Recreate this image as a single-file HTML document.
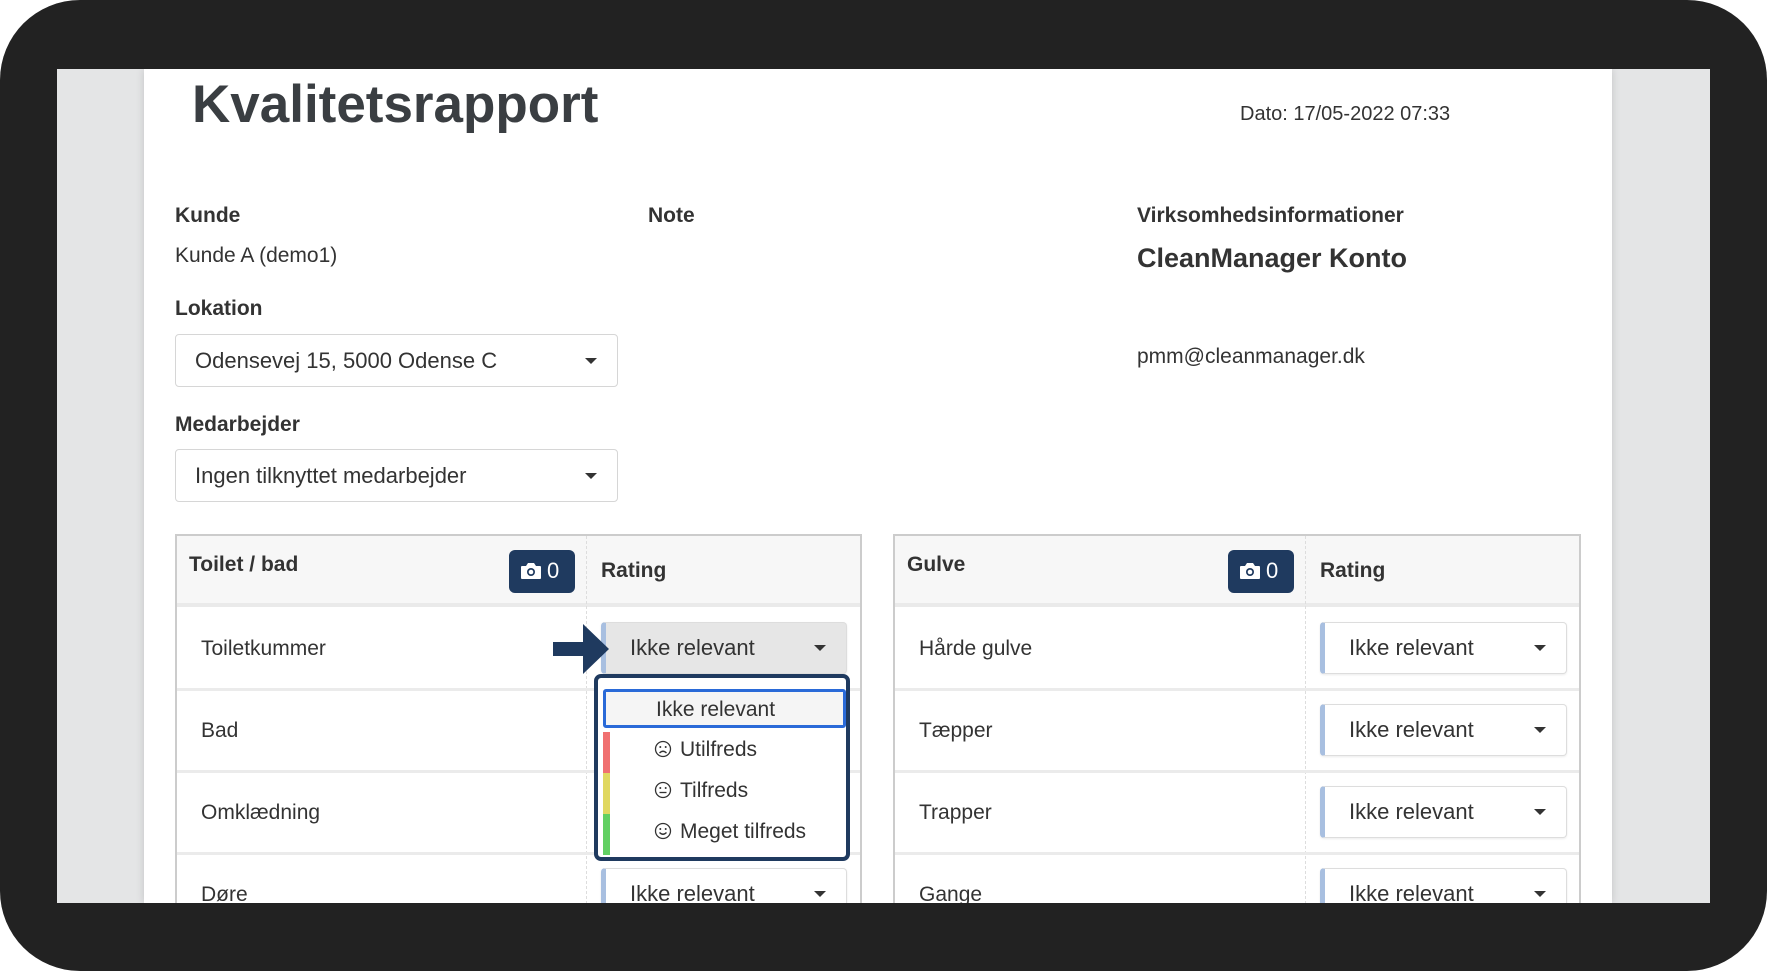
<!DOCTYPE html>
<html><head><meta charset="utf-8"><style>
*{box-sizing:border-box;margin:0;padding:0}
body{width:1767px;height:971px;background:#fff;font-family:"Liberation Sans",sans-serif;color:#333;position:relative;overflow:hidden}
.frame{position:absolute;left:0;top:0;width:1767px;height:971px;background:#222;border-radius:80px}
.screen{position:absolute;left:57px;top:69px;width:1653px;height:834px;background:#e4e5e6;overflow:hidden}
.page{position:absolute;left:87px;top:0;width:1468px;height:834px;background:#fff;box-shadow:0 0 8px rgba(0,0,0,.15)}
.a{position:absolute;white-space:nowrap}
.lbl{font-weight:bold;font-size:21px;color:#333}
.txt{font-size:21px;color:#333}
.sel{position:absolute;border:1px solid #d6d6d6;border-radius:4px;background:#fff;font-size:22px;color:#333}
.sel span{position:absolute;left:19px;top:50%;transform:translateY(-50%)}
.caret{position:absolute;right:20px;top:50%;margin-top:-3px;width:0;height:0;border-left:6px solid transparent;border-right:6px solid transparent;border-top:6px solid #333}
.tbl{position:absolute;border:2px solid #ccc;border-bottom:none}
.th{position:absolute;left:0;right:0;top:0;height:71px;background:#f7f7f7;border-bottom:4px solid #eaeaea}
.vdiv{position:absolute;top:0;bottom:0;width:0;border-left:1px dashed #ddd}
.row{position:absolute;left:0;right:0;height:82px;border-bottom:3px solid #ebebeb}
.cam{position:absolute;width:66px;height:43px;background:#1f3a5f;border-radius:6px;color:#fff;font-size:22px}
.rs{position:absolute;height:52px;border:1px solid #ddd;border-left:5px solid #a8bfe0;border-radius:4px;background:#fff;font-size:22px;box-shadow:0 1px 2px rgba(0,0,0,.08)}
.rs span{position:absolute;left:24px;top:50%;transform:translateY(-50%)}
.face{position:absolute;left:-26px;top:2px}
</style></head><body>
<div class="frame"></div>
<div class="screen">
<div class="page">
 <div class="a" style="left:48px;top:5px;font-size:53px;font-weight:bold;color:#3a3e42">Kvalitetsrapport</div>
 <div class="a txt" style="left:1096px;top:34px;font-size:20px">Dato: 17/05-2022 07:33</div>
 <div class="a lbl" style="left:31px;top:135px">Kunde</div>
 <div class="a txt" style="left:31px;top:175px">Kunde A (demo1)</div>
 <div class="a lbl" style="left:31px;top:228px">Lokation</div>
 <div class="sel" style="left:31px;top:265px;width:443px;height:53px"><span>Odensevej 15, 5000 Odense C</span><i class="caret"></i></div>
 <div class="a lbl" style="left:31px;top:344px">Medarbejder</div>
 <div class="sel" style="left:31px;top:380px;width:443px;height:53px"><span>Ingen tilknyttet medarbejder</span><i class="caret"></i></div>
 <div class="a lbl" style="left:504px;top:135px">Note</div>
 <div class="a lbl" style="left:993px;top:135px">Virksomhedsinformationer</div>
 <div class="a" style="left:993px;top:174px;font-size:27px;font-weight:bold;color:#333">CleanManager Konto</div>
 <div class="a txt" style="left:993px;top:276px">pmm@cleanmanager.dk</div>

 <div class="tbl" style="left:31px;top:465px;width:687px;height:380px">
  <div class="th"><div class="a lbl" style="left:12px;top:17px">Toilet / bad</div>
   <div class="cam" style="left:332px;top:14px"><svg style="position:absolute;left:11px;top:12px" width="22" height="18" viewBox="0 0 22 18"><path d="M2 4h4l2-3h6l2 3h4a1 1 0 0 1 1 1v11a1 1 0 0 1-1 1H2a1 1 0 0 1-1-1V5a1 1 0 0 1 1-1z" fill="#fff"/><circle cx="11" cy="10" r="4" fill="#1f3a5f"/><circle cx="11" cy="10" r="2.3" fill="#fff"/></svg><span style="position:absolute;left:38px;top:8px">0</span></div>
   <div class="a lbl" style="left:424px;top:23px">Rating</div></div>
  <div class="vdiv" style="left:409px"></div>
  <div class="row" style="top:73px"><div class="a txt" style="left:24px;top:28px">Toiletkummer</div></div>
  <div class="row" style="top:155px"><div class="a txt" style="left:24px;top:28px">Bad</div></div>
  <div class="row" style="top:237px"><div class="a txt" style="left:24px;top:28px">Omklædning</div></div>
  <div class="row" style="top:319px"><div class="a txt" style="left:24px;top:28px">Døre</div></div>
  <div class="rs" style="left:424px;top:86px;width:246px;background:#e6e6e6"><span>Ikke relevant</span><i class="caret"></i></div>
  <div class="rs" style="left:424px;top:332px;width:246px"><span>Ikke relevant</span><i class="caret"></i></div>
 </div>

 <div class="tbl" style="left:749px;top:465px;width:688px;height:380px">
  <div class="th"><div class="a lbl" style="left:12px;top:17px">Gulve</div>
   <div class="cam" style="left:333px;top:14px"><svg style="position:absolute;left:11px;top:12px" width="22" height="18" viewBox="0 0 22 18"><path d="M2 4h4l2-3h6l2 3h4a1 1 0 0 1 1 1v11a1 1 0 0 1-1 1H2a1 1 0 0 1-1-1V5a1 1 0 0 1 1-1z" fill="#fff"/><circle cx="11" cy="10" r="4" fill="#1f3a5f"/><circle cx="11" cy="10" r="2.3" fill="#fff"/></svg><span style="position:absolute;left:38px;top:8px">0</span></div>
   <div class="a lbl" style="left:425px;top:23px">Rating</div></div>
  <div class="vdiv" style="left:410px"></div>
  <div class="row" style="top:73px"><div class="a txt" style="left:24px;top:28px">Hårde gulve</div></div>
  <div class="row" style="top:155px"><div class="a txt" style="left:24px;top:28px">Tæpper</div></div>
  <div class="row" style="top:237px"><div class="a txt" style="left:24px;top:28px">Trapper</div></div>
  <div class="row" style="top:319px"><div class="a txt" style="left:24px;top:28px">Gange</div></div>
  <div class="rs" style="left:425px;top:86px;width:247px"><span>Ikke relevant</span><i class="caret"></i></div>
  <div class="rs" style="left:425px;top:168px;width:247px"><span>Ikke relevant</span><i class="caret"></i></div>
  <div class="rs" style="left:425px;top:250px;width:247px"><span>Ikke relevant</span><i class="caret"></i></div>
  <div class="rs" style="left:425px;top:332px;width:247px"><span>Ikke relevant</span><i class="caret"></i></div>
 </div>

 <svg class="a" style="left:409px;top:555px" width="58" height="50" viewBox="0 0 58 50"><path d="M0 18h30V0l26 25-26 25V32H0z" fill="#1f3a5f"/></svg>
 <div class="a" style="left:450px;top:605px;width:256px;height:187px;border:4px solid #1f3a5f;border-radius:7px;background:#fff">
  <div class="a" style="left:5px;top:54px;width:7px;height:41px;background:#f07070"></div>
  <div class="a" style="left:5px;top:95px;width:7px;height:41px;background:#e0d860"></div>
  <div class="a" style="left:5px;top:136px;width:7px;height:41px;background:#62d062"></div>
  <div class="a" style="left:5px;top:11px;width:243px;height:39px;border:3px solid #2a6ad8;border-radius:3px;background:#f5f5f5;font-size:21px"><span style="position:absolute;left:50px;top:6px">Ikke relevant</span></div>
  <div class="a" style="left:82px;top:60px;font-size:21px"><svg class="face" width="18" height="18" viewBox="0 0 18 18"><circle cx="9" cy="9" r="7.5" fill="none" stroke="#333" stroke-width="1.3"/><circle cx="6.3" cy="7" r="1" fill="#333"/><circle cx="11.7" cy="7" r="1" fill="#333"/><path d="M5.5 13q3.5-3.5 7 0" fill="none" stroke="#333" stroke-width="1.3"/></svg>Utilfreds</div>
  <div class="a" style="left:82px;top:101px;font-size:21px"><svg class="face" width="18" height="18" viewBox="0 0 18 18"><circle cx="9" cy="9" r="7.5" fill="none" stroke="#333" stroke-width="1.3"/><circle cx="6.3" cy="7" r="1" fill="#333"/><circle cx="11.7" cy="7" r="1" fill="#333"/><path d="M5.5 11.5h7" fill="none" stroke="#333" stroke-width="1.3"/></svg>Tilfreds</div>
  <div class="a" style="left:82px;top:142px;font-size:21px"><svg class="face" width="18" height="18" viewBox="0 0 18 18"><circle cx="9" cy="9" r="7.5" fill="none" stroke="#333" stroke-width="1.3"/><circle cx="6.3" cy="7" r="1" fill="#333"/><circle cx="11.7" cy="7" r="1" fill="#333"/><path d="M5.5 10.5q3.5 3.5 7 0" fill="none" stroke="#333" stroke-width="1.3"/></svg>Meget tilfreds</div>
 </div>
</div>
</div>
</body></html>
